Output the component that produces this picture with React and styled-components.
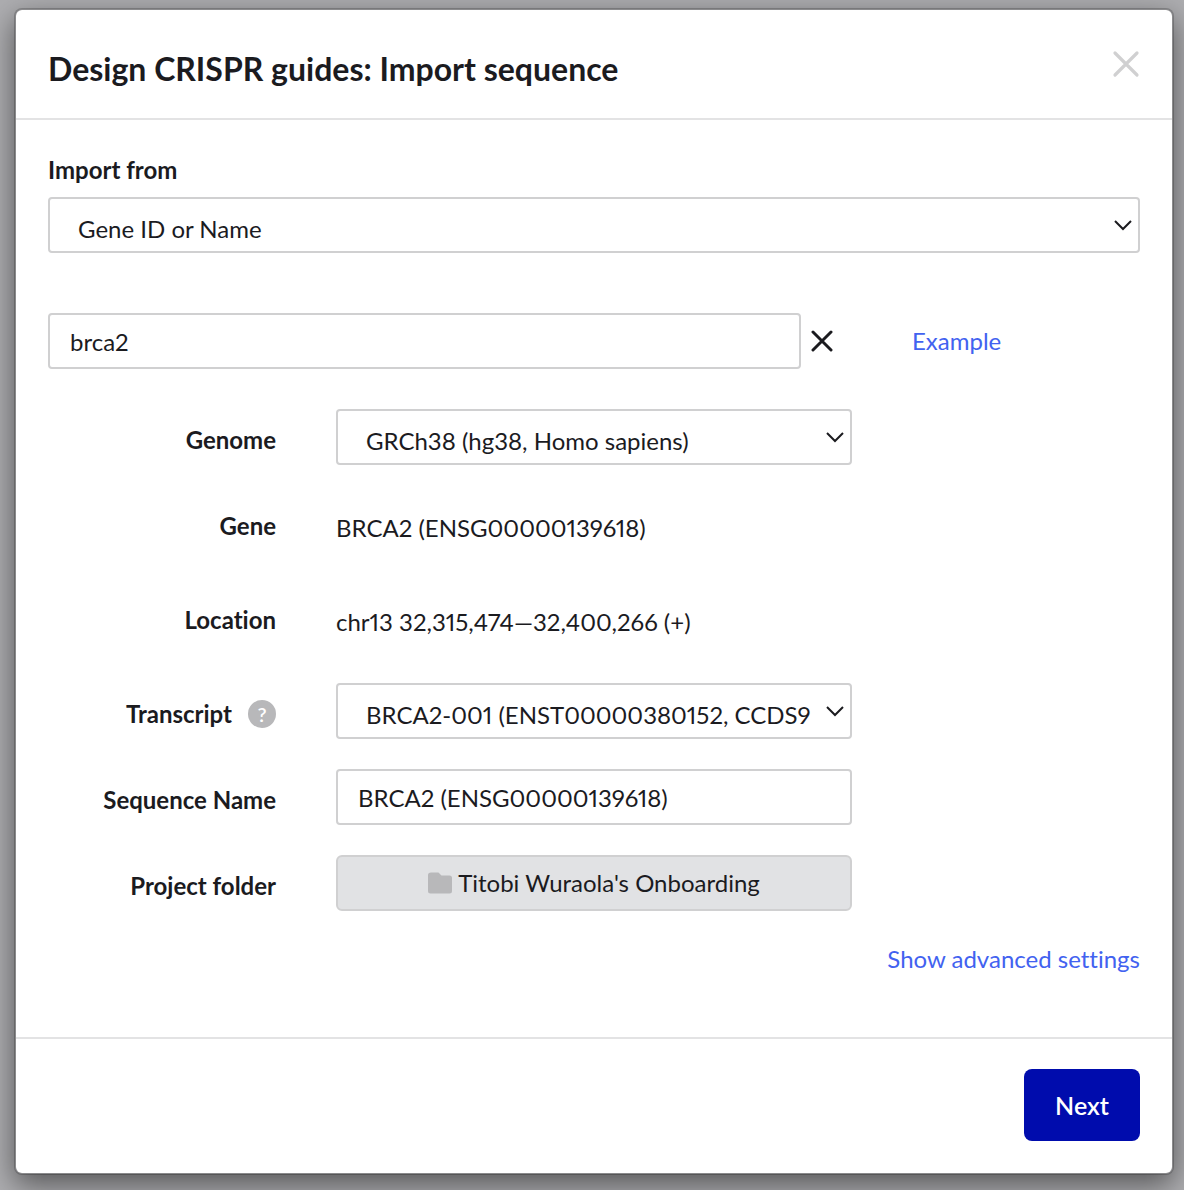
import React, { useState } from "react";
import styled, { createGlobalStyle } from "styled-components";

const GlobalStyle = createGlobalStyle`
    * {
        box-sizing: border-box;
    }
    body {
        margin: 0;
        background-color: #aeaeb1;
        font-family: Lato, "Liberation Sans", sans-serif;
        font-size: 24px;
        line-height: 30px;
        font-variant-ligatures: none;
        font-variant-numeric: proportional-nums;
        color: #1b1b1f;
    }
    button, input, select {
        font: inherit;
        font-variant-ligatures: none;
        font-variant-numeric: proportional-nums;
        color: inherit;
    }
`;

const Modal = styled.div`
    margin: 8px 10px 15px 14px;
    border: 2px solid rgba(0, 0, 0, 0.2);
    border-radius: 8px;
    background-color: white;
    background-clip: padding-box;
    box-shadow: 0 10px 30px rgba(0, 0, 0, 0.5);
`;

const Header = styled.header`
    display: flex;
    justify-content: space-between;
    align-items: center;
    height: 110px;
    padding: 0 32px;
    border-bottom: 2px solid #e3e3e4;
`;

const Title = styled.h1`
    margin: 10px 0 0;
    font-size: 32px;
    line-height: 40px;
    font-weight: 700;
`;

const IconButton = styled.button`
    display: flex;
    padding: 0;
    border: none;
    background: none;
    color: ${(props) => props.$color};
    cursor: pointer;
`;

const Body = styled.div`
    padding: 35px 32px 63px;
`;

const FieldLabel = styled.label`
    display: block;
    margin-bottom: 12px;
    font-weight: 700;
`;

const SelectBox = styled.div`
    position: relative;

    svg {
        position: absolute;
        top: 21px;
        right: 7px;
        pointer-events: none;
    }
`;

const Select = styled.select`
    display: block;
    appearance: none;
    width: 100%;
    height: 56px;
    padding: 7px 34px 0 28px;
    border: 2px solid #d0d0d1;
    border-radius: 4px;
    background-color: white;
`;

const TextInput = styled.input`
    display: block;
    width: 100%;
    min-width: 0;
    height: 56px;
    padding: 0 20px;
    border: 2px solid #d0d0d1;
    border-radius: 4px;
    background-color: white;
`;

const SearchRow = styled.div`
    display: grid;
    grid-template-columns: minmax(0, 1fr) 22px 297px;
    align-items: center;
    margin: 60px 0 40px;
    column-gap: 10px;
`;

const Link = styled.a`
    color: #4262f0;
    text-decoration: none;
`;

const ExampleLink = styled(Link)`
    margin-left: 69px;
`;

const Form = styled.div`
    display: flex;
    flex-direction: column;
    gap: 30px;
`;

const Row = styled.div`
    display: grid;
    grid-template-columns: 19fr 43fr 19fr;
    column-gap: 60px;
    min-height: ${(props) => (props.$tall ? "64px" : "56px")};
`;

const RowLabel = styled.div`
    display: flex;
    justify-content: flex-end;
    align-items: center;
    gap: 16px;
    height: 30px;
    margin-top: 16px;
    font-weight: 700;
    white-space: nowrap;
`;

const Value = styled.output`
    padding-top: 18px;
    white-space: nowrap;
`;

const Help = styled.button`
    width: 28px;
    height: 28px;
    padding: 0;
    border: none;
    border-radius: 50%;
    background-color: #b8b8ba;
    color: white;
    font-size: 20px;
    font-weight: 600;
    line-height: 28px;
`;

const FolderButton = styled.button`
    display: flex;
    justify-content: center;
    align-items: center;
    gap: 6px;
    height: 56px;
    border: 2px solid #d0d0d1;
    border-radius: 6px;
    background-color: #e1e2e4;
    white-space: nowrap;
`;

const Advanced = styled.div`
    margin-top: 33px;
    text-align: right;
`;

const Footer = styled.footer`
    display: flex;
    justify-content: flex-end;
    padding: 30px 32px 32px;
    border-top: 2px solid #e3e3e4;
`;

const NextButton = styled.button`
    width: 116px;
    height: 72px;
    border: none;
    border-radius: 8px;
    background-color: #000cad;
    color: white;
    font-size: 25px;
    font-weight: 600;
`;

const Cross = ({ size, inset, stroke }) => (
    <svg width={size} height={size} viewBox={`0 0 ${size} ${size}`} aria-hidden="true">
        <path
            d={`M${inset} ${inset}L${size - inset} ${size - inset}M${size - inset} ${inset}L${inset} ${size - inset}`}
            stroke="currentColor"
            strokeWidth={stroke}
            strokeLinecap="round"
        />
    </svg>
);

const Dropdown = ({ id, text }) => (
    <SelectBox>
        <Select id={id}>
            <option>{text}</option>
        </Select>
        <svg width="20" height="14" viewBox="0 0 20 14" fill="none" aria-hidden="true">
            <path d="M2 3L10 11L18 3" stroke="#1b1b1f" strokeWidth="2" />
        </svg>
    </SelectBox>
);

const FolderIcon = () => (
    <svg width="24" height="22" viewBox="0 0 24 22" aria-hidden="true">
        <path
            d="M3 0.5H10.5L13.5 3.5H21.5Q24 3.5 24 6V19Q24 21.5 21.5 21.5H2.5Q0 21.5 0 19V3Q0 0.5 3 0.5Z"
            fill="#b8b8ba"
        />
    </svg>
);

const App = () => {
    const [query, setQuery] = useState("brca2");
    const [name, setName] = useState("BRCA2 (ENSG00000139618)");

    return (
        <>
            <GlobalStyle />
            <Modal role="dialog" aria-labelledby="title">
                <Header>
                    <Title id="title">Design CRISPR guides: Import sequence</Title>
                    <IconButton $color="#d0d0d1" aria-label="Close">
                        <Cross size={28} inset={3} stroke={3.2} />
                    </IconButton>
                </Header>
                <Body>
                    <FieldLabel htmlFor="source">Import from</FieldLabel>
                    <Dropdown id="source" text="Gene ID or Name" />
                    <SearchRow>
                        <TextInput
                            aria-label="Gene"
                            value={query}
                            onChange={(e) => setQuery(e.target.value)}
                        />
                        <IconButton $color="#1b1b1f" aria-label="Clear" onClick={() => setQuery("")}>
                            <Cross size={22} inset={2} stroke={3} />
                        </IconButton>
                        <ExampleLink href="#example">Example</ExampleLink>
                    </SearchRow>
                    <Form>
                        <Row>
                            <RowLabel as="label" htmlFor="genome">Genome</RowLabel>
                            <Dropdown id="genome" text="GRCh38 (hg38, Homo sapiens)" />
                        </Row>
                        <Row $tall>
                            <RowLabel as="label" htmlFor="gene">Gene</RowLabel>
                            <Value id="gene">BRCA2 (ENSG00000139618)</Value>
                        </Row>
                        <Row $tall>
                            <RowLabel as="label" htmlFor="location">Location</RowLabel>
                            <Value id="location">chr13 32,315,474—32,400,266 (+)</Value>
                        </Row>
                        <Row>
                            <RowLabel>
                                <label htmlFor="transcript">Transcript</label>
                                <Help aria-label="About transcripts">?</Help>
                            </RowLabel>
                            <Dropdown id="transcript" text="BRCA2-001 (ENST00000380152, CCDS9" />
                        </Row>
                        <Row>
                            <RowLabel as="label" htmlFor="name">Sequence Name</RowLabel>
                            <TextInput
                                id="name"
                                value={name}
                                onChange={(e) => setName(e.target.value)}
                            />
                        </Row>
                        <Row>
                            <RowLabel as="label" htmlFor="folder">Project folder</RowLabel>
                            <FolderButton id="folder">
                                <FolderIcon />
                                Titobi Wuraola's Onboarding
                            </FolderButton>
                        </Row>
                    </Form>
                    <Advanced>
                        <Link href="#advanced">Show advanced settings</Link>
                    </Advanced>
                </Body>
                <Footer>
                    <NextButton>Next</NextButton>
                </Footer>
            </Modal>
        </>
    );
};

export default App;
